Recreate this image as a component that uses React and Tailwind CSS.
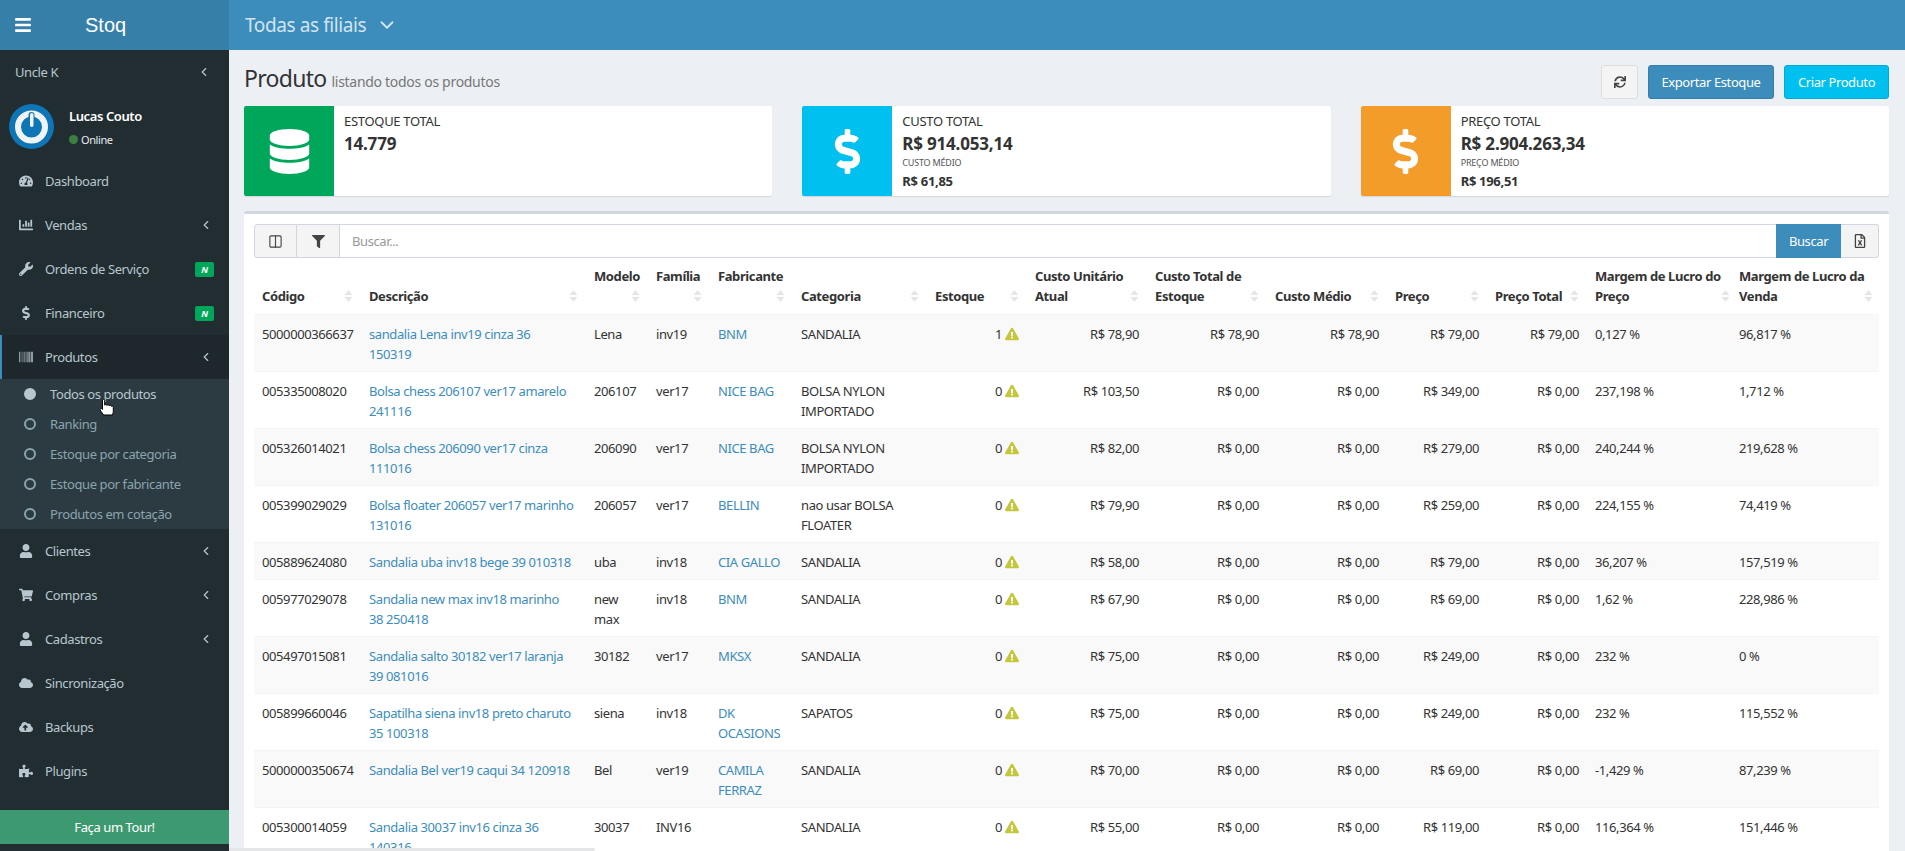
import { ChevronDown, ChevronLeft, Columns2 } from "lucide-react";
import {
  FaBars,
  FaBarcode,
  FaChartBar,
  FaCloud,
  FaCloudUploadAlt,
  FaDatabase,
  FaDollarSign,
  FaExclamationTriangle,
  FaFilter,
  FaPuzzlePiece,
  FaRegFileExcel,
  FaShoppingCart,
  FaSync,
  FaTachometerAlt,
  FaUser,
  FaWrench,
} from "react-icons/fa";

const columns = [
  { label: "Código", width: "w-[107px]" },
  { label: "Descrição", width: "w-[225px]" },
  { label: "Modelo", width: "w-[62px]", two: true },
  { label: "Família", width: "w-[62px]", two: true },
  { label: "Fabricante", width: "w-[83px]", two: true },
  { label: "Categoria", width: "w-[134px]" },
  { label: "Estoque", width: "w-[100px]" },
  { label: "Custo Unitário\nAtual", width: "w-[120px]" },
  { label: "Custo Total de\nEstoque", width: "w-[120px]" },
  { label: "Custo Médio", width: "w-[120px]" },
  { label: "Preço", width: "w-[100px]" },
  { label: "Preço Total", width: "w-[100px]" },
  { label: "Margem de Lucro do\nPreço", width: "w-[144px]" },
  { label: "Margem de Lucro da\nVenda", width: "w-[148px]" },
];

const products = [
  ["5000000366637", "sandalia Lena inv19 cinza 36\n150319", "Lena", "inv19", "BNM", "SANDALIA", "1", "R$ 78,90", "R$ 78,90", "R$ 78,90", "R$ 79,00", "R$ 79,00", "0,127 %", "96,817 %"],
  ["005335008020", "Bolsa chess 206107 ver17 amarelo\n241116", "206107", "ver17", "NICE BAG", "BOLSA NYLON\nIMPORTADO", "0", "R$ 103,50", "R$ 0,00", "R$ 0,00", "R$ 349,00", "R$ 0,00", "237,198 %", "1,712 %"],
  ["005326014021", "Bolsa chess 206090 ver17 cinza\n111016", "206090", "ver17", "NICE BAG", "BOLSA NYLON\nIMPORTADO", "0", "R$ 82,00", "R$ 0,00", "R$ 0,00", "R$ 279,00", "R$ 0,00", "240,244 %", "219,628 %"],
  ["005399029029", "Bolsa floater 206057 ver17 marinho\n131016", "206057", "ver17", "BELLIN", "nao usar BOLSA\nFLOATER", "0", "R$ 79,90", "R$ 0,00", "R$ 0,00", "R$ 259,00", "R$ 0,00", "224,155 %", "74,419 %"],
  ["005889624080", "Sandalia uba inv18 bege 39 010318", "uba", "inv18", "CIA GALLO", "SANDALIA", "0", "R$ 58,00", "R$ 0,00", "R$ 0,00", "R$ 79,00", "R$ 0,00", "36,207 %", "157,519 %"],
  ["005977029078", "Sandalia new max inv18 marinho\n38 250418", "new\nmax", "inv18", "BNM", "SANDALIA", "0", "R$ 67,90", "R$ 0,00", "R$ 0,00", "R$ 69,00", "R$ 0,00", "1,62 %", "228,986 %"],
  ["005497015081", "Sandalia salto 30182 ver17 laranja\n39 081016", "30182", "ver17", "MKSX", "SANDALIA", "0", "R$ 75,00", "R$ 0,00", "R$ 0,00", "R$ 249,00", "R$ 0,00", "232 %", "0 %"],
  ["005899660046", "Sapatilha siena inv18 preto charuto\n35 100318", "siena", "inv18", "DK\nOCASIONS", "SAPATOS", "0", "R$ 75,00", "R$ 0,00", "R$ 0,00", "R$ 249,00", "R$ 0,00", "232 %", "115,552 %"],
  ["5000000350674", "Sandalia Bel ver19 caqui 34 120918", "Bel", "ver19", "CAMILA\nFERRAZ", "SANDALIA", "0", "R$ 70,00", "R$ 0,00", "R$ 0,00", "R$ 69,00", "R$ 0,00", "-1,429 %", "87,239 %"],
  ["005300014059", "Sandalia 30037 inv16 cinza 36\n140316", "30037", "INV16", "", "SANDALIA", "0", "R$ 55,00", "R$ 0,00", "R$ 0,00", "R$ 119,00", "R$ 0,00", "116,364 %", "151,446 %"],
];

const linkCols = [1, 4];
const rightCols = [6, 7, 8, 9, 10, 11];

function MenuItem({ icon: Icon, label, arrow, badge, active }) {
  return (
    <div className={`flex h-[44px] items-center pr-[15px] ${active ? "border-l-[2px] border-[#3c8dbc] bg-[#1e282c] pl-[16px]" : "pl-[18px]"}`}>
      <span className="flex w-[15px] justify-center text-[14px] text-[#b8c7ce]">
        <Icon />
      </span>
      <span className="ml-[12px] flex-1 text-[#b8c7ce]">{label}</span>
      {arrow && <ChevronLeft size={14} className="mr-[1px] text-[#b8c7ce]" strokeWidth={2} />}
      {badge && (
        <span className="flex h-[15px] w-[19px] items-center justify-center rounded-[2px] bg-[#00a65a] text-[9px] font-bold italic leading-none text-white">
          N
        </span>
      )}
    </div>
  );
}

function SubItem({ label, active }) {
  return (
    <div className="flex h-[30px] items-center pl-[24px]">
      <span className={`h-[12px] w-[12px] rounded-full border-2 ${active ? "border-[#b8c7ce] bg-[#b8c7ce]" : "border-[#8aa4af]"}`} />
      <span className={`ml-[14px] ${active ? "text-[#b8c7ce]" : "text-[#8aa4af]"}`}>{label}</span>
    </div>
  );
}

function Sidebar() {
  return (
    <aside className="relative flex h-full w-[229px] shrink-0 flex-col overflow-hidden bg-[#222d32]">
      <div className="flex h-[44px] shrink-0 items-center justify-between pb-[1px] pl-[15px] pr-[18px] text-[#b8c7ce]">
        <span>Uncle K</span>
        <ChevronLeft size={14} strokeWidth={2} />
      </div>
      <div className="flex h-[65px] shrink-0 items-center pl-[9px]">
        <svg width="45" height="45" viewBox="0 0 45 45">
          <circle cx="22.5" cy="22.5" r="22.5" fill="#0e75b6" />
          <circle cx="22.5" cy="23" r="13.5" fill="none" stroke="#f1f4f6" strokeWidth="6" />
          <rect x="19.5" y="8" width="6" height="15" rx="3" fill="#0e75b6" />
          <rect x="21" y="9" width="3.5" height="14" rx="1.7" fill="#f1f4f6" />
        </svg>
        <div className="ml-[15px]">
          <div className="font-semibold leading-[20px] text-white">Lucas Couto</div>
          <div className="mt-[6px] flex items-center text-[11px] leading-[15px] text-[#e8eef0]">
            <span className="mr-[3px] h-[9px] w-[9px] rounded-full bg-[#3c8040]" />
            Online
          </div>
        </div>
      </div>
      <div className="shrink-0">
        <MenuItem icon={FaTachometerAlt} label="Dashboard" />
        <MenuItem icon={FaChartBar} label="Vendas" arrow />
        <MenuItem icon={FaWrench} label="Ordens de Serviço" badge />
        <MenuItem icon={FaDollarSign} label="Financeiro" badge />
        <MenuItem icon={FaBarcode} label="Produtos" arrow active />
        <div className="bg-[#2c3b41]">
          <SubItem label="Todos os produtos" active />
          <SubItem label="Ranking" />
          <SubItem label="Estoque por categoria" />
          <SubItem label="Estoque por fabricante" />
          <SubItem label="Produtos em cotação" />
        </div>
        <MenuItem icon={FaUser} label="Clientes" arrow />
        <MenuItem icon={FaShoppingCart} label="Compras" arrow />
        <MenuItem icon={FaUser} label="Cadastros" arrow />
        <MenuItem icon={FaCloud} label="Sincronização" />
        <MenuItem icon={FaCloudUploadAlt} label="Backups" />
        <MenuItem icon={FaPuzzlePiece} label="Plugins" />
      </div>
      <div className="absolute bottom-[7px] left-0 flex h-[34px] w-full items-center justify-center bg-[#3d9970] text-white">
        Faça um Tour!
      </div>
      {/* mouse pointer from the capture */}
      <svg className="absolute left-[99px] top-[349px]" width="17" height="18" viewBox="0 0 17 18">
        <path
          d="M3.5 1.2c0-1.2 2.2-1.2 2.2 0v5c.4-.9 2-.9 2.2.2.4-.8 2-.8 2.2.3.5-.7 2.1-.5 2.2.6.6-.5 2 0 2 1.2v4.2c0 1.4-.6 2.2-1 3.3H4.5c-.6-1.4-2-2.6-3.3-5-.7-1.3 1-2.2 2.3-.6V1.2z"
          fill="#fff"
          stroke="#000"
          strokeWidth="1"
        />
      </svg>
    </aside>
  );
}

function StatCard({ color, icon: Icon, title, value, subtitle, subvalue }) {
  return (
    <div className="flex h-[90px] overflow-hidden rounded-[2px] bg-white shadow-[0_1px_1px_rgba(0,0,0,0.1)]">
      <div className={`flex w-[90px] shrink-0 items-center justify-center text-white ${color}`}>
        <Icon className="text-[45px]" />
      </div>
      <div className="pl-[10px] pt-[5px] text-[#333]">
        <div className="uppercase leading-[20px] tracking-[-0.3px]">{title}</div>
        <div className="text-[17px] font-bold leading-[26px] tracking-[-0.2px]">{value}</div>
        {subtitle && (
          <>
            <div className="text-[9px] uppercase leading-[12px] tracking-[-0.2px] text-[#555]">{subtitle}</div>
            <div className="mt-[2px] text-[13px] font-bold leading-[20px] tracking-[-0.3px]">{subvalue}</div>
          </>
        )}
      </div>
    </div>
  );
}

function SortArrows() {
  return (
    <svg className="shrink-0" width="9" height="20" viewBox="0 0 9 20">
      <path d="M4.5 4 8.5 9H.5z" fill="#e6e6e6" />
      <path d="M4.5 16 .5 11h8z" fill="#e6e6e6" />
    </svg>
  );
}

function ProductTable() {
  return (
    <table className="w-[1625px] table-fixed border-collapse">
      <thead>
        <tr>
          {columns.map((col) => (
            <th key={col.label} className={`${col.width} px-[8px] pb-[8px] pt-[8px] align-bottom`}>
              <div className={`flex justify-between text-left font-bold text-[#333] ${col.two ? "flex-col" : "items-end"}`}>
                <span className="whitespace-pre leading-[20px]">{col.label}</span>
                <span className={col.two ? "flex justify-end" : ""}>
                  <SortArrows />
                </span>
              </div>
            </th>
          ))}
        </tr>
      </thead>
      <tbody>
        {products.map((row, i) => (
          <tr key={row[0]} className={`border-t border-[#f4f4f4] ${i % 2 === 0 ? "bg-[#f9f9f9]" : "bg-white"}`}>
            {row.map((cell, c) => (
              <td
                key={c}
                className={`whitespace-pre-line px-[8px] pb-[7px] pt-[9px] align-top leading-[20px] ${rightCols.includes(c) ? "text-right" : ""} ${linkCols.includes(c) ? "text-[#3c8dbc]" : "text-[#333]"}`}
              >
                {c === 6 ? (
                  <span className="inline-flex items-center justify-end gap-[3px]">
                    {cell}
                    <FaExclamationTriangle className="text-[14px] text-[#c4c63c]" />
                  </span>
                ) : (
                  cell
                )}
              </td>
            ))}
          </tr>
        ))}
      </tbody>
    </table>
  );
}

export default function App() {
  return (
    <div className="relative flex h-[851px] w-full flex-col overflow-hidden bg-[#ecf0f5] text-[13px] leading-[20px] tracking-[-0.4px] font-['Noto_Sans',sans-serif]">
      <header className="flex h-[50px] shrink-0">
        <div className="flex w-[229px] items-center bg-[#367fa9] pl-[14px] text-white">
          <FaBars className="text-[18px]" />
          <span className="ml-[53px] text-[20px] tracking-normal font-['Liberation_Sans',sans-serif]">Stoq</span>
        </div>
        <div className="flex flex-1 items-center bg-[#3c8dbc] pl-[16px] text-[#d3e4ef]">
          <span className="text-[19px] leading-[26px] tracking-[-0.4px]">Todas as filiais</span>
          <ChevronDown size={22} className="ml-[10px]" strokeWidth={2} />
        </div>
      </header>
      <div className="flex min-h-0 flex-1">
        <Sidebar />
        <main className="min-w-0 flex-1 pl-[15px] pr-[16px]">
          <div className="flex h-[56px] items-start justify-between pt-[15px]">
            <h1 className="-mt-[2px] leading-[30px]">
              <span className="text-[23px] tracking-[-0.7px] text-[#333]">Produto</span>
              <span className="ml-[5px] text-[14px] tracking-[-0.3px] text-[#777]">listando todos os produtos</span>
            </h1>
            <div className="flex h-[34px] gap-[10px] text-white">
              <button className="flex w-[37px] items-center justify-center rounded-[3px] border border-[#ddd] bg-[#f4f4f4] text-[12px] text-[#444]">
                <FaSync />
              </button>
              <button className="w-[126px] rounded-[3px] border border-[#367fa9] bg-[#3c8dbc]">Exportar Estoque</button>
              <button className="w-[105px] rounded-[3px] border border-[#00acd6] bg-[#00c0ef]">Criar Produto</button>
            </div>
          </div>
          <div className="grid grid-cols-3 gap-[30px]">
            <StatCard color="bg-[#00a65a]" icon={FaDatabase} title="Estoque total" value="14.779" />
            <StatCard color="bg-[#00c0ef]" icon={FaDollarSign} title="Custo total" value="R$ 914.053,14" subtitle="Custo médio" subvalue="R$ 61,85" />
            <StatCard color="bg-[#f39c2a]" icon={FaDollarSign} title="Preço total" value="R$ 2.904.263,34" subtitle="Preço médio" subvalue="R$ 196,51" />
          </div>
          <section className="mt-[15px] rounded-t-[3px] border-t-[3px] border-[#d2d6de] bg-white px-[10px] pt-[10px]">
            <div className="flex h-[34px]">
              <button className="flex w-[43px] items-center justify-center rounded-l-[3px] border border-[#d2d6de] bg-[#f4f4f4] text-[#444]">
                <Columns2 size={15} strokeWidth={1.8} />
              </button>
              <button className="flex w-[43px] items-center justify-center border-y border-r border-[#d2d6de] bg-[#f4f4f4] text-[13px] text-[#444]">
                <FaFilter />
              </button>
              <div className="flex flex-1 items-center border-y border-[#d2d6de] pl-[12px] text-[#999]">Buscar...</div>
              <button className="w-[65px] bg-[#3c8dbc] text-white">Buscar</button>
              <button className="flex w-[38px] items-center justify-center rounded-r-[3px] border-y border-r border-[#d2d6de] bg-[#f4f4f4] text-[14px] text-[#444]">
                <FaRegFileExcel />
              </button>
            </div>
            <ProductTable />
          </section>
        </main>
      </div>
      {/* horizontal scrollbar thumb at the very bottom */}
      <div className="absolute bottom-0 left-[229px] h-[3px] w-[366px] rounded-r-[3px] bg-[#e4e6e8]" />
    </div>
  );
}
